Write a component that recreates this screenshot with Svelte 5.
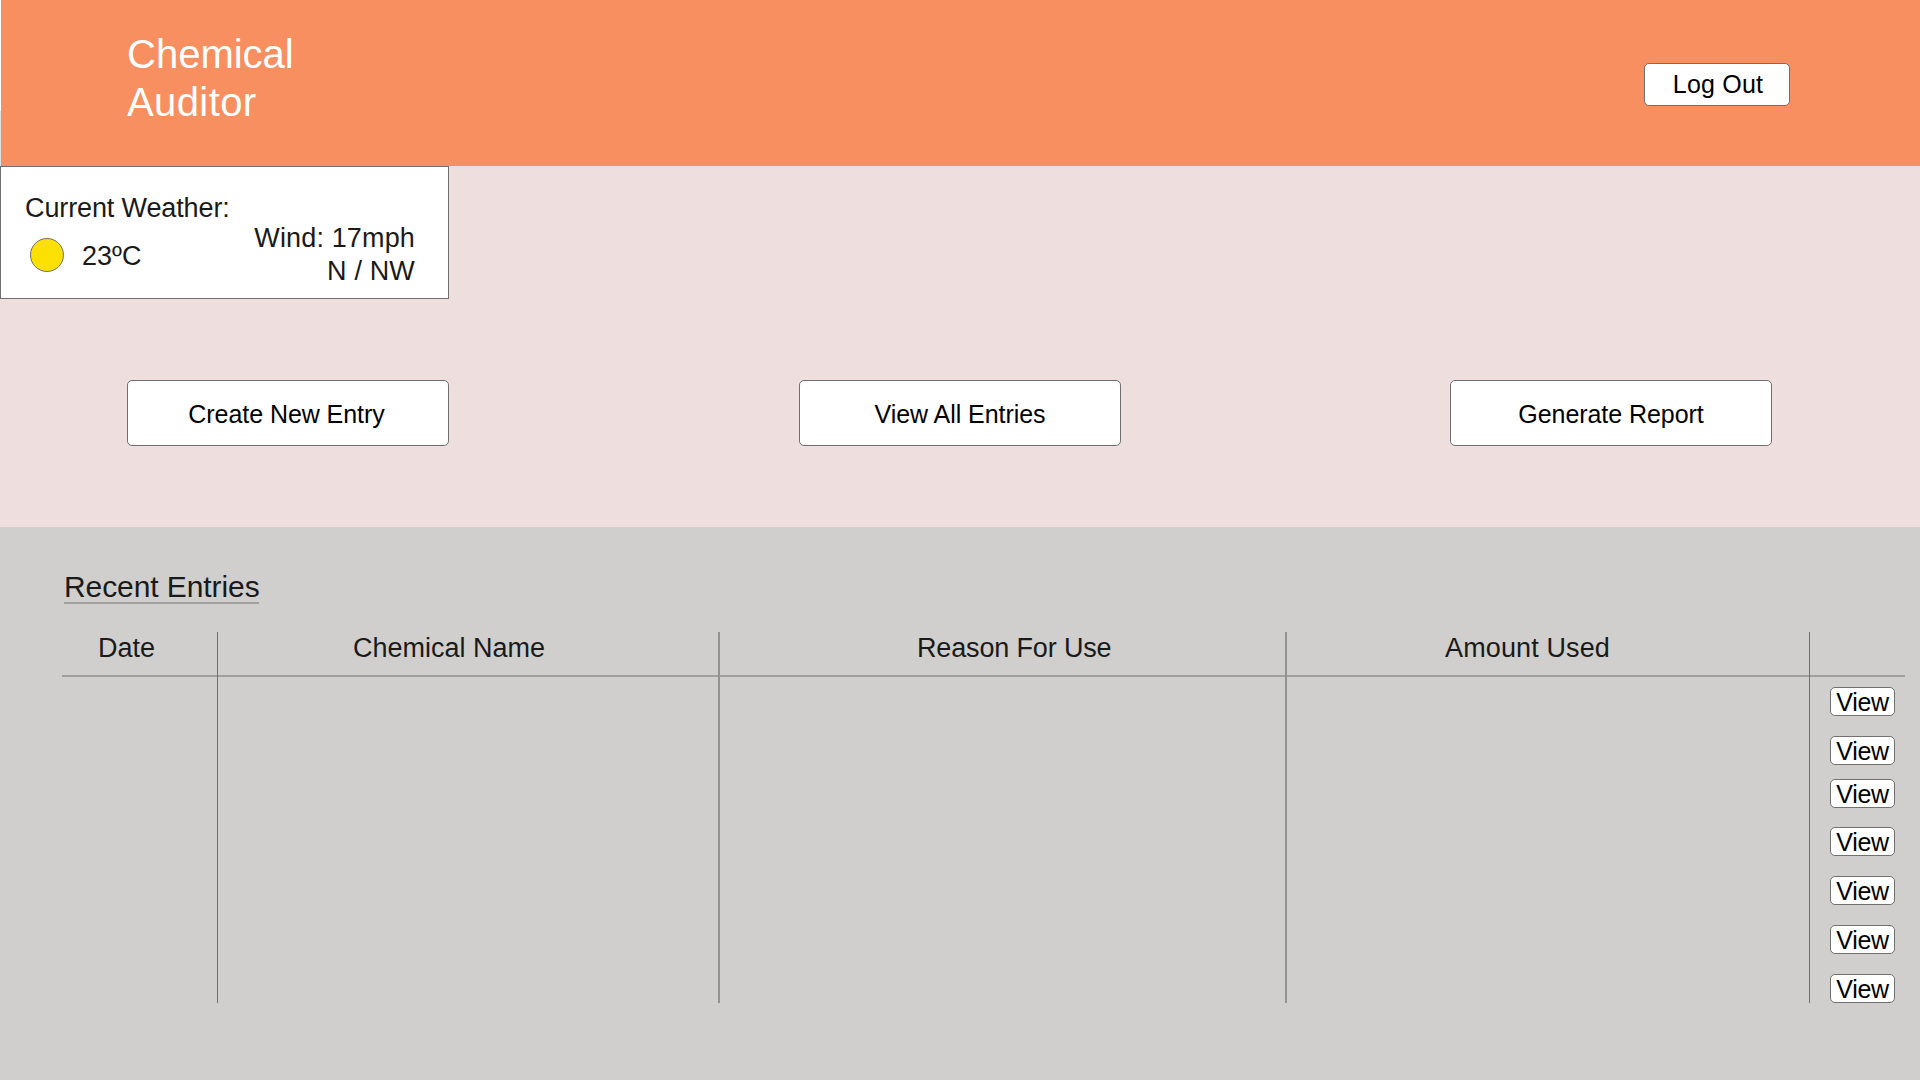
<script>
  const actions = [
    { label: 'Create New Entry', kind: 'create' },
    { label: 'View All Entries', kind: 'all' },
    { label: 'Generate Report', kind: 'report' }
  ];
  const columns = [
    { label: 'Date', kind: 'date' },
    { label: 'Chemical Name', kind: 'chemical' },
    { label: 'Reason For Use', kind: 'reason' },
    { label: 'Amount Used', kind: 'amount' },
    { label: '', kind: 'view' }
  ];
  const rows = [1, 2, 3, 4, 5, 6, 7];
</script>

<div class="page">
  <header>
    <h1>Chemical<br /><span class="second">Auditor</span></h1>
    <button class="logout">Log Out</button>
  </header>

  <section class="overview">
    <div class="weather">
      <div class="now">
        <p class="title">Current Weather:</p>
        <div class="temp">
          <svg width="34" height="34" viewBox="0 0 34 34">
            <circle cx="17" cy="17" r="16.5" fill="#fce000" stroke="#707070" />
          </svg>
          <span>23ºC</span>
        </div>
      </div>
      <p class="wind">Wind: 17mph<br />N / NW</p>
    </div>
    <nav>
      {#each actions as action}
        <button class={action.kind}>{action.label}</button>
      {/each}
    </nav>
  </section>

  <section class="entries">
    <h2>Recent Entries</h2>
    <div class="table">
      {#each columns as column}
        <div class="column {column.kind}">
          <div class="head">{column.label}</div>
          {#if column.kind === 'view'}
            <div class="views">
              {#each rows as row}
                <button>View</button>
              {/each}
            </div>
          {/if}
        </div>
      {/each}
    </div>
  </section>
</div>

<style>
  :global(body) {
    margin: 0;
    background: #fff;
  }
  .page {
    width: 1920px;
    height: 1080px;
    overflow: hidden;
    display: flex;
    flex-direction: column;
    font-family: 'Liberation Sans', Arial, sans-serif;
    font-size: 27px;
    color: #1a1a1a;
  }
  h1, h2, p {
    margin: 0;
    font-weight: 400;
  }
  button {
    box-sizing: border-box;
    margin: 0;
    padding: 0;
    font: 25px 'Liberation Sans', Arial, sans-serif;
    letter-spacing: -0.06px;
    color: #000;
    background: #fff;
    border: 1px solid #707070;
    border-radius: 5px;
    white-space: nowrap;
  }
  header {
    box-sizing: border-box;
    height: 166px;
    flex: none;
    display: flex;
    justify-content: space-between;
    align-items: flex-start;
    padding: 30px 130px 0 127px;
    background: linear-gradient(#f78f61, #f78f61) 1px 0 no-repeat, linear-gradient(#fff 111px, #e0e0e0 111px);
  }
  h1 {
    font-size: 40px;
    line-height: 48px;
    color: #fff;
  }
  .second {
    letter-spacing: 0.4px;
  }
  .logout {
    width: 146px;
    height: 43px;
    margin-top: 33px;
    padding-left: 2px;
    letter-spacing: 0.2px;
  }
  .overview {
    height: 361px;
    flex: none;
    background: #eedede;
  }
  .weather {
    box-sizing: border-box;
    width: 449px;
    height: 133px;
    display: flex;
    justify-content: space-between;
    padding: 25px 33px 0 24px;
    background: #fff;
    border: 1px solid #707070;
    line-height: 33px;
  }
  .title {
    letter-spacing: -0.12px;
  }
  .temp {
    display: flex;
    align-items: center;
    gap: 18px;
    margin: 13px 0 0 5px;
    height: 34px;
  }
  .temp span {
    padding-top: 2px;
  }
  .wind {
    margin-top: 30px;
    text-align: right;
    letter-spacing: 0.15px;
  }
  nav {
    display: flex;
    justify-content: space-between;
    padding: 81px 148px 0 127px;
  }
  nav button {
    width: 322px;
    height: 66px;
    padding-top: 3px;
  }
  nav .create {
    padding-right: 3px;
  }
  nav .all {
    margin-left: 21px;
  }
  .entries {
    flex: 1;
    padding: 41px 15px 0 62px;
    background: #d0cfcd;
  }
  h2 {
    width: 195px;
    height: 34px;
    margin-left: 2px;
    font-size: 30px;
    line-height: 38px;
    letter-spacing: -0.08px;
    white-space: nowrap;
    border-bottom: 2px solid #a0a09f;
  }
  .table {
    display: grid;
    grid-template-columns: 155px 501px 567px 524px 96px;
    height: 370px;
    margin-top: 28px;
  }
  .column + .column {
    border-left: 1px solid #707070;
  }
  .column.reason,
  .column.amount {
    border-left: 2px solid #929292;
  }
  .head {
    height: 43px;
    line-height: 33px;
    border-bottom: 2px solid #a0a09f;
    white-space: nowrap;
  }
  .date .head {
    padding-left: 36px;
  }
  .chemical .head {
    padding-left: 135px;
  }
  .reason .head {
    padding-left: 197px;
    letter-spacing: -0.15px;
  }
  .amount .head {
    padding-left: 158px;
    letter-spacing: 0.12px;
  }
  .views {
    display: flex;
    flex-direction: column;
    gap: 20px;
    padding: 10px 0 0 20px;
  }
  .views button {
    width: 65px;
    height: 29px;
    flex: none;
    padding-top: 1px;
    line-height: 27px;
    letter-spacing: -0.3px;
  }
  .views button:nth-child(3) {
    margin-top: -6px;
  }
  .views button:nth-child(4) {
    margin-top: -1px;
  }
</style>
